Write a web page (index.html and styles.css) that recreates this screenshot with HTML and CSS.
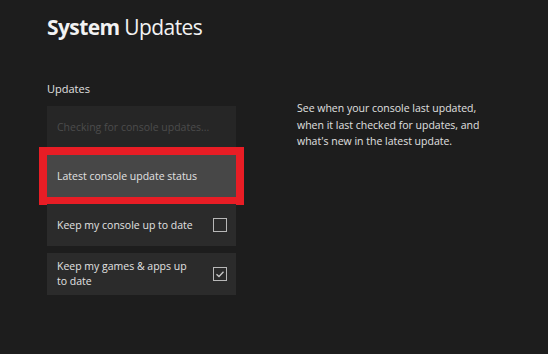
FILE: index.html
```html
<!DOCTYPE html>
<html>
<head>
<meta charset="utf-8">
<link rel="stylesheet" href="styles.css">
</head>
<body>
<div class="page">
  <h1 class="title"><span class="bold">System</span> Updates</h1>
  <div class="content">
    <div class="left">
      <div class="label">Updates</div>
      <div class="list">
        <div class="row disabled">Checking for console updates...</div>
        <div class="row focused">Latest console update status</div>
        <div class="row">
          <span class="text">Keep my console up to date</span>
          <span class="box"></span>
        </div>
        <div class="row">
          <span class="text">Keep my games &amp; apps up to date</span>
          <span class="box">
            <svg width="10" height="10" viewBox="0 0 10 10"><path d="M1.5 5.2 L4 7.5 L8.5 2.8" fill="none" stroke="#c8c8c8" stroke-width="1.3"/></svg>
          </span>
        </div>
      </div>
    </div>
    <div class="desc">See when your console last updated, when it last checked for updates, and what's new in the latest update.</div>
  </div>
</div>
</body>
</html>
```
FILE: styles.css
```css
html, body {
  margin: 0;
  padding: 0;
  background: #1d1d1d;
  width: 548px;
  height: 354px;
  overflow: hidden;
  font-family: "Open Sans", "Noto Sans", sans-serif;
  color: #e6e6e6;
}
.page {
  padding: 12px 0 0 47px;
}
.title {
  margin: 0;
  font-size: 21px;
  font-weight: 400;
  color: #f2f2f2;
  line-height: 30px;
  letter-spacing: -0.6px;
}
.bold {
  font-weight: 700;
}
.content {
  display: flex;
  margin-top: 40px;
}
.left {
  width: 189px;
}
.label {
  font-size: 11px;
  line-height: 14px;
  color: #e0e0e0;
  margin-bottom: 10px;
}
.list {
  display: flex;
  flex-direction: column;
  gap: 7px;
}
.row {
  height: 42px;
  background: #2b2b2b;
  display: flex;
  align-items: center;
  justify-content: space-between;
  padding: 0 9px 0 10px;
  box-sizing: border-box;
  font-size: 10.5px;
  line-height: 15px;
  color: #e2e2e2;
}
.row.disabled {
  color: #4c4c4c;
  background: #262626;
}
.row.focused {
  background: #474747;
  outline: 8px solid #e81d25;
}
.text {
  max-width: 139px;
}
.box {
  width: 14px;
  height: 14px;
  box-sizing: border-box;
  border: 1.5px solid #b8b8b8;
  display: flex;
  align-items: center;
  justify-content: center;
  flex: none;
}
.desc {
  margin-left: 61px;
  margin-top: 18px;
  width: 200px;
  font-size: 10.5px;
  line-height: 16.5px;
  color: #e0e0e0;
}
```
